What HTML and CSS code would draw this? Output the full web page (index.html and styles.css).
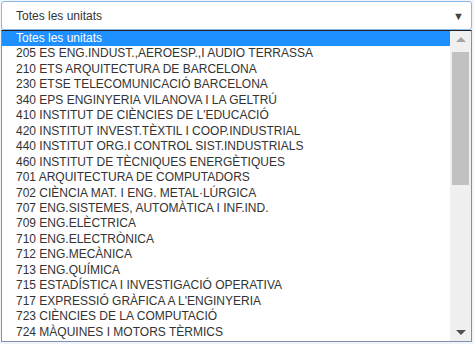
FILE: index.html
```html
<!DOCTYPE html>
<html lang="ca">
<head>
    <meta charset="UTF-8">
    <meta name="viewport" content="width=device-width, initial-scale=1.0">
    <title>Unitats</title>
    <link rel="stylesheet" href="styles.css">
</head>
<body>
    <!-- Select with its list open -->
    <div class="picker">
        <div class="select">
            <span>Totes les unitats</span>
            <span class="caret">&#9660;</span>
        </div>

        <div class="dropdown">
            <ul class="options">
                <li class="selected">Totes les unitats</li>
                <li>205 ES ENG.INDUST.,AEROESP.,I AUDIO TERRASSA</li>
                <li>210 ETS ARQUITECTURA DE BARCELONA</li>
                <li>230 ETSE TELECOMUNICACIÓ BARCELONA</li>
                <li>340 EPS ENGINYERIA VILANOVA I LA GELTRÚ</li>
                <li>410 INSTITUT DE CIÈNCIES DE L'EDUCACIÓ</li>
                <li>420 INSTITUT INVEST.TÈXTIL I COOP.INDUSTRIAL</li>
                <li>440 INSTITUT ORG.I CONTROL SIST.INDUSTRIALS</li>
                <li>460 INSTITUT DE TÈCNIQUES ENERGÈTIQUES</li>
                <li>701 ARQUITECTURA DE COMPUTADORS</li>
                <li>702 CIÈNCIA MAT. I ENG. METAL·LÚRGICA</li>
                <li>707 ENG.SISTEMES, AUTOMÀTICA I INF.IND.</li>
                <li>709 ENG.ELÈCTRICA</li>
                <li>710 ENG.ELECTRÒNICA</li>
                <li>712 ENG.MECÀNICA</li>
                <li>713 ENG.QUÍMICA</li>
                <li>715 ESTADÍSTICA I INVESTIGACIÓ OPERATIVA</li>
                <li>717 EXPRESSIÓ GRÀFICA A L'ENGINYERIA</li>
                <li>723 CIÈNCIES DE LA COMPUTACIÓ</li>
                <li>724 MÀQUINES I MOTORS TÈRMICS</li>
            </ul>

            <!-- Scrollbar -->
            <div class="scrollbar">
                <span class="arrow up"></span>
                <div class="track">
                    <div class="thumb"></div>
                </div>
                <span class="arrow down"></span>
            </div>
        </div>
    </div>
</body>
</html>
```

FILE: styles.css
```css
body {
    margin: 0;
    background-color: #f1f4f9;
    font-family: "Liberation Sans", Arial, sans-serif;
    color: #333;
}
.picker {
    width: 472px;
    padding-top: 1px;
}
.select {
    display: flex;
    justify-content: space-between;
    align-items: center;
    height: 27px;
    margin-left: 1px;
    padding: 0 7px 0 14px;
    background-color: white;
    border: 1px solid #8ab8ea;
    border-radius: 3px;
    font-size: 12px;
}
.caret {
    font-size: 11px;
    color: #444;
}
.dropdown {
    display: flex;
    height: 310px;
    margin-left: 1px;
    background-color: white;
    border: 1px solid #7d8fb3;
    border-top: 1px solid #222;
}
.options {
    flex: 1;
    margin: 0;
    padding: 0;
    list-style: none;
    overflow: hidden;
    font-size: 12px;
    line-height: 15.45px;
}
.options li {
    padding-left: 14px;
    white-space: nowrap;
}
.options li.selected {
    background-color: #1e90ff;
    color: white;
}
.scrollbar {
    display: flex;
    flex-direction: column;
    width: 21px;
    background-color: #f0f0f0;
}
.arrow {
    display: flex;
    justify-content: center;
    align-items: center;
    height: 17px;
}
.arrow.up::before {
    content: "";
    border-left: 5px solid transparent;
    border-right: 5px solid transparent;
    border-bottom: 5px solid #a3a3a3;
}
.arrow.down::before {
    content: "";
    border-left: 5px solid transparent;
    border-right: 5px solid transparent;
    border-top: 5px solid #505050;
}
.track {
    flex: 1;
    padding: 4px 2px 0;
}
.thumb {
    height: 133px;
    background-color: #c1c1c1;
}
```
